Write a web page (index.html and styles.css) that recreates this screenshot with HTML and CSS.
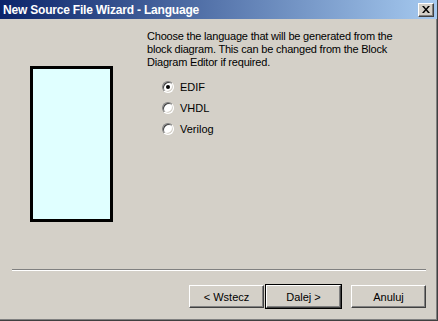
FILE: index.html
```html
<!DOCTYPE html>
<html>
<head>
<meta charset="utf-8">
<link rel="stylesheet" href="styles.css">
</head>
<body>
<div class="window">
  <div class="titlebar">
    <span class="title">New Source File Wizard - Language</span>
    <span class="close"><svg width="8" height="7" viewBox="0 0 8 7"><path d="M0 0h2l2 2.5L6 0h2L5 3.5 8 7H6L4 4.5 2 7H0l3-3.5z" fill="#000"/></svg></span>
  </div>
  <div class="content">
    <div class="preview"><div class="block"></div></div>
    <div class="main">
      <p class="desc">Choose the language that will be generated from the block diagram. This can be changed from the Block Diagram Editor if required.</p>
      <div class="radios">
        <label class="radio"><span class="dot checked"></span>EDIF</label>
        <label class="radio"><span class="dot"></span>VHDL</label>
        <label class="radio"><span class="dot"></span>Verilog</label>
      </div>
    </div>
  </div>
  <div class="sep"></div>
  <div class="buttons">
    <div class="btn">&lt; Wstecz</div>
    <div class="btn default">Dalej &gt;</div>
    <div class="btn gap">Anuluj</div>
  </div>
</div>
</body>
</html>
```
FILE: styles.css
```css
html, body { margin: 0; padding: 0; }
body { width: 438px; height: 321px; overflow: hidden; background: #d4d0c8; font-family: "Liberation Sans", Arial, sans-serif; font-size: 11px; color: #000; }
.window { width: 438px; height: 321px; box-sizing: border-box; background: #d4d0c8; border-right: 1px solid #404040; border-bottom: 1px solid #404040; box-shadow: inset -1px -1px 0 #808080; display: flex; flex-direction: column; }
.titlebar { height: 19px; background: linear-gradient(to right, #0a246a, #a6caf0); display: flex; align-items: center; justify-content: space-between; padding: 0 3px 0 3px; }
.title { color: #fff; font-family: "Liberation Sans", Arial, sans-serif; font-weight: bold; font-size: 12px; letter-spacing: -0.2px; }
.close { width: 16px; height: 14px; box-sizing: border-box; background: #d4d0c8; display: flex; align-items: center; justify-content: center; border-top: 1px solid #fff; border-left: 1px solid #fff; border-right: 1px solid #404040; border-bottom: 1px solid #404040; box-shadow: inset -1px -1px 0 #808080; }
.content { display: flex; height: 250px; }
.preview { width: 147px; padding-top: 47px; }
.block { margin-left: 30px; width: 77px; height: 150px; border: 3px solid #000; background: #e0ffff; }
.main { padding-top: 11px; }
.desc { margin: 0; width: 260px; line-height: 13px; letter-spacing: -0.2px; }
.radios { margin-top: 11px; display: flex; flex-direction: column; gap: 8px; padding-left: 15px; }
.radio { display: flex; align-items: center; height: 13px; }
.dot { width: 12px; height: 12px; box-sizing: border-box; border-radius: 50%; background: #fff; margin-right: 6px; border: 1px solid; border-color: #808080 #fff #fff #808080; box-shadow: inset 1px 1px 0 #404040, inset -1px -1px 0 #d4d0c8; position: relative; }
.dot.checked::after { content: ""; position: absolute; left: 3px; top: 3px; width: 4px; height: 4px; border-radius: 50%; background: #000; }
.sep { margin: 0 11px 0 12px; border-top: 1px solid #808080; border-bottom: 1px solid #fff; }
.buttons { display: flex; justify-content: flex-end; padding: 14px 11px 0 0; }
.btn { width: 75px; height: 23px; box-sizing: border-box; display: flex; align-items: center; justify-content: center; border-top: 1px solid #fff; border-left: 1px solid #fff; border-right: 1px solid #404040; border-bottom: 1px solid #404040; box-shadow: inset -1px -1px 0 #808080; }
.btn.default { outline: 1px solid #000; margin-left: 2px; }
.btn.gap { margin-left: 10px; }
```
